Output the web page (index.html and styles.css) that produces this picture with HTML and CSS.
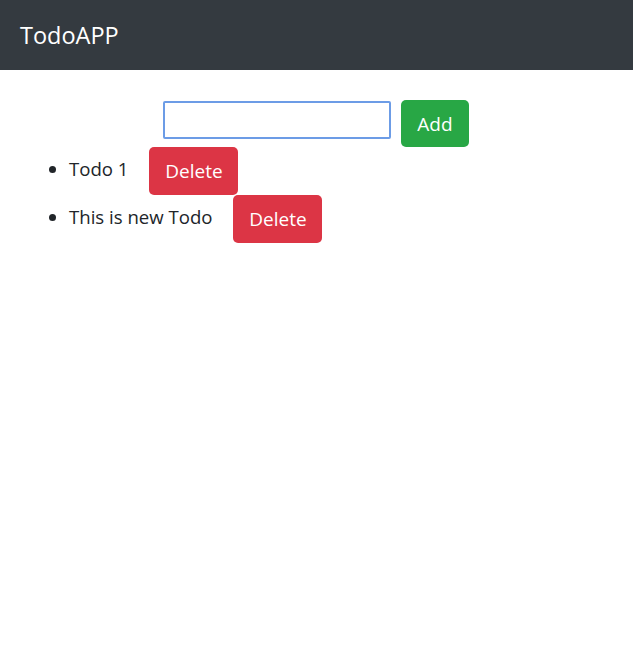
FILE: index.html
```html
<!DOCTYPE html>
<html lang="en">
<head>
<meta charset="utf-8">
<title>TodoAPP</title>
<link rel="stylesheet" href="styles.css">
</head>
<body>
<nav class="navbar">
  <span class="brand">TodoAPP</span>
</nav>
<main class="content">
  <form class="add-form">
    <input class="todo-input" type="text"> <button type="button" class="btn btn-add">Add</button>
  </form>
  <ul class="todo-list">
    <li class="todo-item">Todo 1 <button type="button" class="btn btn-delete">Delete</button></li>
    <li class="todo-item">This is new Todo <button type="button" class="btn btn-delete">Delete</button></li>
  </ul>
</main>
</body>
</html>
```
FILE: styles.css
```css
* { box-sizing: border-box; }
html, body { margin: 0; padding: 0; }
body {
  font-family: "Open Sans", "Noto Sans", sans-serif;
  font-size: 18.6px;
  color: #212529;
  background: #fff;
}
.navbar {
  height: 70px;
  background: #343a40;
  display: flex;
  align-items: center;
  padding: 0 20px;
}
.brand {
  color: #fff;
  font-size: 23.5px;
}
.content {
  padding-top: 30px;
}
.add-form {
  margin: 0;
  text-align: center;
  font-size: 0;
}
.todo-input {
  width: 228px;
  height: 38px;
  border: 2px solid #6c9ce6;
  border-radius: 2px;
  vertical-align: top;
  margin-top: 1px;
  margin-right: 10px;
  margin-left: -1px;
  font-size: 16px;
}
.btn {
  font-family: inherit;
  font-size: 19px;
  color: #fff;
  border: none;
  border-radius: 5px;
  height: 47px;
  padding: 0 16px;
  vertical-align: top;
}
.btn-add {
  background: #28a745;
  width: 68px;
}
.todo-list {
  margin: 0;
  padding-left: 69px;
}
.todo-item {
  height: 48px;
  line-height: 44px;
}
.btn-delete {
  background: #dc3545;
  width: 89px;
  height: 48px;
  margin-left: 16px;
  vertical-align: top;
}
```
